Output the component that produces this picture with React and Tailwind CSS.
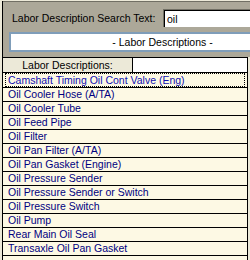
const rows = [
  "Oil Cooler Hose (A/TA)",
  "Oil Cooler Tube",
  "Oil Feed Pipe",
  "Oil Filter",
  "Oil Pan Filter (A/TA)",
  "Oil Pan Gasket (Engine)",
  "Oil Pressure Sender",
  "Oil Pressure Sender or Switch",
  "Oil Pressure Switch",
  "Oil Pump",
  "Rear Main Oil Seal",
  "Transaxle Oil Pan Gasket",
];

export default function App() {
  return (
    <div
      className="w-[250px] h-[260px] overflow-hidden bg-[#ece9d8] pt-px pl-[2px] text-[10.5px] leading-[13px]"
      style={{ fontFamily: '"Liberation Sans", Arial, sans-serif' }}
    >
      <div className="border-l border-black h-full flex flex-col">
        {/* search panel */}
        <div className="w-[330px] h-[56px] shrink-0 border-t border-[#716f64] bg-[#aca899] pl-[6px] pt-[7px]">
          <div className="flex h-[18px]">
            <div className="w-[154px] pl-[3px] flex items-center text-black">
              Labor Description Search Text:
            </div>
            <div className="flex-1 border-t border-l border-[#716f64] bg-white">
              <div className="h-full border-t border-l border-black flex items-center pl-[2px] text-black">
                oil
              </div>
            </div>
          </div>
          <div className="mt-[5px] w-[307px] h-[20px] border-2 border-[#7f9db9] bg-white flex items-center justify-center text-black">
            - Labor Descriptions -
          </div>
        </div>

        {/* grid */}
        <div className="w-[245px] flex-1 flex flex-col bg-[#fdf9e4] border-r border-black">
          <div className="flex h-[16px] shrink-0 border-t border-b border-black">
            <div className="w-[130px] border-r border-black bg-[#ece9d8] flex items-center justify-center text-black">
              Labor Descriptions:
            </div>
            <div className="flex-1 bg-white"></div>
          </div>
          <div className="h-[15px] shrink-0 border-b border-black">
            <div className="h-full mx-[2px] border border-dotted border-black flex items-center pl-[2px] text-[#1010b0]">
              Camshaft Timing Oil Cont Valve (Eng)
            </div>
          </div>
          {rows.map((r) => (
            <div
              key={r}
              className="h-[14px] shrink-0 border-b border-black flex items-center pl-[5px] text-[#000080]"
            >
              {r}
            </div>
          ))}
          <div className="flex-1"></div>
        </div>
      </div>
    </div>
  );
}
